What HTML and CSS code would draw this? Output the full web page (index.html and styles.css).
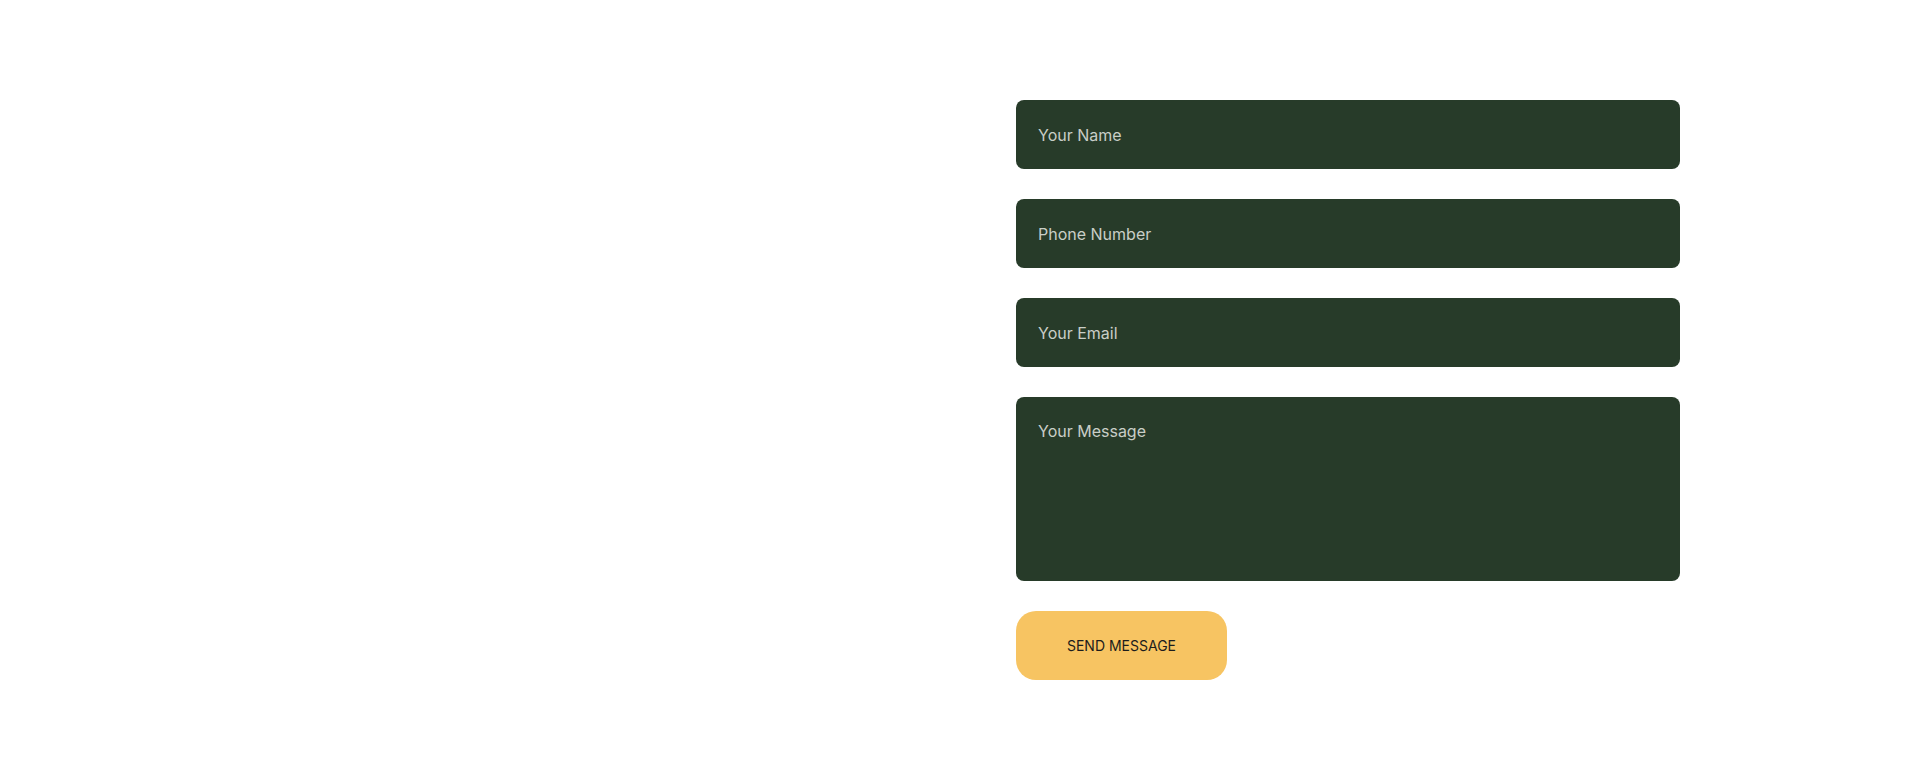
FILE: index.html
```html
<!DOCTYPE html>
<html lang="en">
<head>
<meta charset="utf-8">
<title>Contact</title>
<link rel="stylesheet" href="styles.css">
</head>
<body>
<section class="contact">
  <div class="contact-grid">
    <div class="contact-left"></div>
    <form class="contact-form">
      <input class="field" type="text" placeholder="Your Name">
      <input class="field" type="tel" placeholder="Phone Number">
      <input class="field" type="email" placeholder="Your Email">
      <textarea class="field field-area" placeholder="Your Message"></textarea>
      <div class="actions">
        <button class="send-btn" type="button">SEND MESSAGE</button>
      </div>
    </form>
  </div>
</section>
</body>
</html>
```

FILE: styles.css
```css
* { box-sizing: border-box; }
html, body { margin: 0; padding: 0; background: #ffffff; }
body { font-family: Inter, "Noto Sans", sans-serif; }

.contact { padding: 100px 0 100px; }
.contact-grid {
  max-width: 1440px;
  margin: 0 auto;
  display: grid;
  grid-template-columns: 1fr 1fr;
  column-gap: 112px;
}
.contact-form {
  display: flex;
  flex-direction: column;
  gap: 30px;
}
.field {
  display: block;
  width: 100%;
  height: 69px;
  border: none;
  outline: none;
  border-radius: 8px;
  background: #273b29;
  color: #e6e9e4;
  font-family: Inter, "Noto Sans", sans-serif;
  font-size: 16px;
  padding: 0 22px;
  margin: 0;
}
.field::placeholder { color: #c9cec7; opacity: 1; }
.field-area {
  height: 184px;
  padding: 22px 22px;
  line-height: 24px;
  resize: none;
}
.actions { display: flex; }
.send-btn {
  width: 211px;
  height: 69px;
  border: none;
  border-radius: 20px;
  background: #f7c462;
  color: #1c1c1c;
  font-family: Inter, "Noto Sans", sans-serif;
  font-size: 14px;
  font-weight: 400;
  letter-spacing: 0;
  cursor: pointer;
}
```
